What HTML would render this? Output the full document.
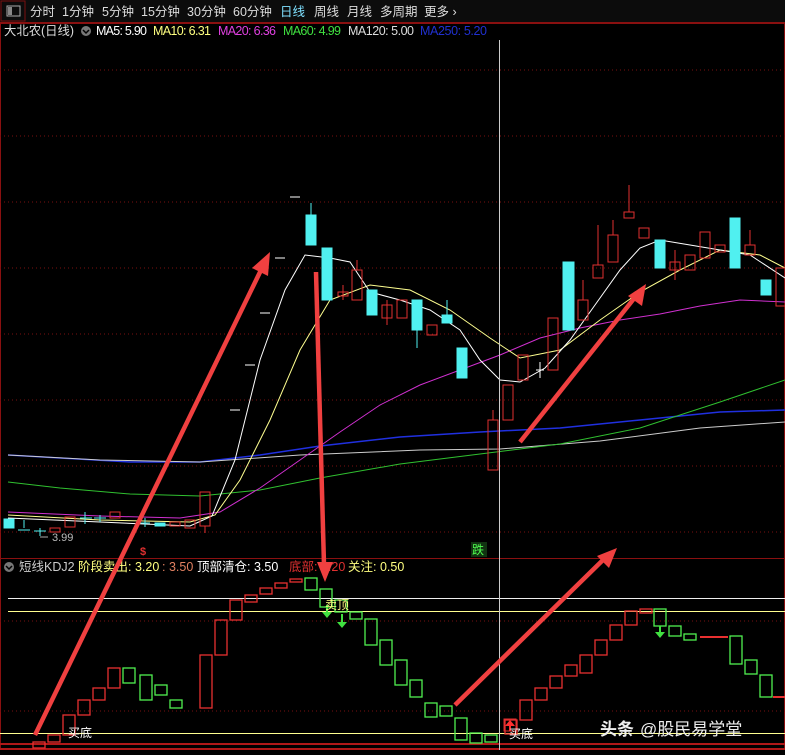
<!DOCTYPE html>
<html><head><meta charset="utf-8"><style>
html,body{margin:0;padding:0;background:#000;width:785px;height:755px;overflow:hidden;font-family:"Liberation Sans","Noto Sans CJK SC",sans-serif}
</style></head><body>
<svg width="785" height="755" style="position:absolute;left:0;top:0" font-family="Liberation Sans, Noto Sans CJK SC, sans-serif">
<rect x="0" y="0" width="785" height="755" fill="#000"/>
<rect x="0" y="0" width="785" height="22" fill="#0c0c0c"/>
<line x1="0" y1="22.5" x2="785" y2="22.5" stroke="#8a1010"/>
<rect x="1" y="1" width="24" height="20" fill="none" stroke="#7a1010"/>
<rect x="7" y="6" width="13" height="10" fill="none" stroke="#aaa"/>
<rect x="8" y="7" width="4" height="8" fill="#888"/>
<g font-size="12.5" fill="#ddd">
<text x="30" y="16">分时</text><text x="62" y="16">1分钟</text><text x="102" y="16">5分钟</text><text x="141" y="16">15分钟</text><text x="187" y="16">30分钟</text><text x="233" y="16">60分钟</text>
<text x="280" y="16" fill="#7fe0ff">日线</text><text x="314" y="16">周线</text><text x="347" y="16">月线</text><text x="380" y="16">多周期</text><text x="424" y="16">更多 ›</text>
</g>
<rect x="0.5" y="23.5" width="784" height="726" fill="none" stroke="#8a1010"/>
<line x1="0" y1="558.5" x2="785" y2="558.5" stroke="#8a1010"/>
<g font-size="12.5">
<text x="4" y="35" fill="#ddd" textLength="70" lengthAdjust="spacingAndGlyphs">大北农(日线)</text>
<circle cx="86" cy="31" r="5" fill="#777"/><path d="M83 30 l3 3 l3 -3" stroke="#000" fill="none" stroke-width="1.5"/>
<text x="96" y="35" fill="#fff" textLength="51">MA5: 5.90</text><text x="153" y="35" fill="#ffff80" textLength="58">MA10: 6.31</text>
<text x="218" y="35" fill="#e040e0" textLength="58">MA20: 6.36</text><text x="283" y="35" fill="#40e040" textLength="58">MA60: 4.99</text>
<text x="348" y="35" fill="#ddd" textLength="66">MA120: 5.00</text><text x="420" y="35" fill="#2030d0" textLength="67">MA250: 5.20</text>
</g>
<g stroke="#7a1010" stroke-dasharray="1,3">
<line x1="0" y1="70" x2="785" y2="70"/><line x1="0" y1="136" x2="785" y2="136"/><line x1="0" y1="202" x2="785" y2="202"/><line x1="0" y1="268" x2="785" y2="268"/><line x1="0" y1="334" x2="785" y2="334"/><line x1="0" y1="400" x2="785" y2="400"/><line x1="0" y1="466" x2="785" y2="466"/><line x1="0" y1="532" x2="785" y2="532"/>
<line x1="0" y1="621" x2="785" y2="621"/><line x1="0" y1="711" x2="785" y2="711"/>
</g>
<polyline fill="none" stroke="#2030e0" stroke-width="1.5" points="8,455 60,458 130,462 200,462 260,455 320,446 400,437 480,432 560,428 640,420 720,412 785,410"/>
<polyline fill="none" stroke="#ccc" points="8,455 100,460 200,462 300,455 420,450 500,449 600,441 700,428 785,422"/>
<polyline fill="none" stroke="#30c030" points="8,482 60,488 130,494 200,496 260,490 320,478 400,464 480,454 560,444 640,428 720,402 785,380"/>
<polyline fill="none" stroke="#d030d0" points="8,512 100,516 180,518 220,512 260,488 300,460 340,432 380,405 420,385 460,370 500,355 540,338 580,328 620,320 660,314 700,306 740,300 785,302"/>
<polyline fill="none" stroke="#ffff90" points="8,515 100,520 190,522 215,515 240,480 270,420 300,350 330,300 370,285 410,290 450,310 490,338 520,358 560,350 600,320 640,292 680,270 720,250 760,255 785,268"/>
<polyline fill="none" stroke="#fff" points="8,518 100,522 190,526 212,516 235,460 260,360 285,290 305,255 330,258 350,262 370,292 400,300 430,310 460,330 480,360 500,380 520,382 545,368 570,340 595,305 620,270 640,248 660,240 690,245 720,250 750,255 785,278"/>
<g fill="#50f0f0" stroke="#50f0f0">
<rect x="4" y="519" width="10" height="9"/><rect x="155" y="523" width="10" height="3"/>
<rect x="306" y="215" width="10" height="30"/><line x1="311" y1="203" x2="311" y2="215"/>
<rect x="322" y="248" width="10" height="52"/>
<rect x="367" y="290" width="10" height="25"/>
<rect x="412" y="300" width="10" height="30"/><line x1="417" y1="330" x2="417" y2="348"/>
<rect x="442" y="315" width="10" height="8"/><line x1="447" y1="300" x2="447" y2="315"/>
<rect x="457" y="348" width="10" height="30"/>
<rect x="563" y="262" width="11" height="68"/>
<rect x="655" y="240" width="10" height="28"/>
<rect x="730" y="218" width="10" height="50"/>
<rect x="761" y="280" width="10" height="15"/>
<line x1="24" y1="520" x2="24" y2="528"/><line x1="18" y1="530" x2="30" y2="530"/>
<line x1="40" y1="528" x2="40" y2="536"/><line x1="34" y1="531" x2="46" y2="531"/>
<line x1="85" y1="512" x2="85" y2="524"/><line x1="80" y1="518" x2="92" y2="518"/>
<line x1="100" y1="515" x2="100" y2="522"/><line x1="94" y1="518" x2="106" y2="518"/>
<line x1="145" y1="518" x2="145" y2="527"/><line x1="140" y1="523" x2="150" y2="523"/>
</g>
<g fill="none" stroke="#e03030">
<rect x="50" y="528" width="10" height="4"/><rect x="65" y="517" width="10" height="10"/>
<rect x="110" y="512" width="10" height="6"/><rect x="170" y="522" width="10" height="4"/><rect x="185" y="520" width="10" height="8"/>
<rect x="200" y="492" width="10" height="34"/><line x1="205" y1="526" x2="205" y2="533"/>
<rect x="338" y="292" width="10" height="4"/><line x1="343" y1="285" x2="343" y2="300"/>
<rect x="352" y="270" width="10" height="30"/><line x1="357" y1="260" x2="357" y2="270"/>
<rect x="382" y="305" width="10" height="13"/><line x1="387" y1="300" x2="387" y2="325"/>
<rect x="397" y="300" width="10" height="18"/>
<rect x="427" y="325" width="10" height="10"/>
<rect x="488" y="420" width="10" height="50"/><line x1="493" y1="410" x2="493" y2="420"/>
<rect x="503" y="385" width="10" height="35"/>
<rect x="518" y="355" width="10" height="25"/>
<rect x="548" y="318" width="10" height="52"/>
<rect x="578" y="300" width="10" height="20"/><line x1="583" y1="280" x2="583" y2="300"/>
<rect x="593" y="265" width="10" height="13"/><line x1="598" y1="225" x2="598" y2="265"/>
<rect x="608" y="235" width="10" height="27"/><line x1="613" y1="220" x2="613" y2="235"/>
<rect x="624" y="212" width="10" height="6"/><line x1="629" y1="185" x2="629" y2="212"/>
<rect x="639" y="228" width="10" height="10"/>
<rect x="670" y="262" width="10" height="8"/><line x1="675" y1="250" x2="675" y2="280"/>
<rect x="685" y="255" width="10" height="15"/>
<rect x="700" y="232" width="10" height="26"/>
<rect x="715" y="245" width="10" height="7"/>
<rect x="745" y="245" width="10" height="10"/><line x1="750" y1="230" x2="750" y2="245"/>
<rect x="776" y="268" width="10" height="38"/>
</g>
<g stroke="#fff"><line x1="536" y1="370" x2="544" y2="370"/><line x1="540" y1="362" x2="540" y2="378"/>
<line x1="230" y1="410" x2="240" y2="410"/><line x1="245" y1="365" x2="255" y2="365"/><line x1="260" y1="313" x2="270" y2="313"/><line x1="275" y1="258" x2="285" y2="258"/><line x1="290" y1="197" x2="300" y2="197"/></g>
<line x1="40" y1="537" x2="48" y2="537" stroke="#aaa"/>
<text x="52" y="541" fill="#bbb" font-size="11">3.99</text>
<text x="140" y="555" fill="#e03030" font-size="11" font-weight="bold">$</text>
<rect x="471" y="542" width="16" height="15" fill="#113311"/>
<text x="472" y="554" fill="#50ff50" font-size="12">跌</text>
<circle cx="9" cy="567" r="5" fill="#777"/><path d="M6 566 l3 3 l3 -3" stroke="#000" fill="none" stroke-width="1.5"/>
<g font-size="12.5">
<text x="19" y="571" fill="#ccc">短线KDJ2</text><text x="78" y="571" fill="#ffff80">阶段卖出: 3.20</text><text x="162" y="571" fill="#e08060">: 3.50</text>
<text x="197" y="571" fill="#fff">顶部清仓: 3.50</text><text x="289" y="571" fill="#e03030">底部: 0.20</text><text x="348" y="571" fill="#ffff80">关注: 0.50</text>
</g>
<line x1="8" y1="598.5" x2="785" y2="598.5" stroke="#eee"/>
<line x1="8" y1="611.5" x2="785" y2="611.5" stroke="#ffff90"/>
<line x1="0" y1="733.5" x2="785" y2="733.5" stroke="#ffff90"/>
<line x1="0" y1="744" x2="785" y2="744" stroke="#b01818" stroke-width="2"/>
<line x1="0" y1="749" x2="785" y2="749" stroke="#b01818" stroke-width="2"/>
<g fill="none" stroke="#e83030" stroke-width="1.3">
<rect x="33" y="742" width="12" height="6"/><rect x="48" y="735" width="12" height="7"/><rect x="63" y="715" width="12" height="20"/><rect x="78" y="700" width="12" height="15"/><rect x="93" y="688" width="12" height="12"/><rect x="108" y="668" width="12" height="20"/>
<rect x="200" y="655" width="12" height="53"/><rect x="215" y="620" width="12" height="35"/><rect x="230" y="600" width="12" height="20"/><rect x="245" y="595" width="12" height="7"/><rect x="260" y="588" width="12" height="6"/><rect x="275" y="583" width="12" height="5"/><rect x="290" y="579" width="12" height="3"/>
<rect x="505" y="720" width="12" height="14"/><rect x="520" y="700" width="12" height="20"/><rect x="535" y="688" width="12" height="12"/><rect x="550" y="676" width="12" height="12"/><rect x="565" y="665" width="12" height="11"/><rect x="580" y="655" width="12" height="18"/><rect x="595" y="640" width="12" height="15"/><rect x="610" y="625" width="12" height="15"/><rect x="625" y="611" width="12" height="14"/><rect x="640" y="609" width="12" height="4"/>
<line x1="700" y1="637" x2="728" y2="637" stroke-width="2"/><line x1="773" y1="697" x2="785" y2="697" stroke-width="2"/>
</g>
<g fill="none" stroke="#50f050" stroke-width="1.3">
<rect x="123" y="668" width="12" height="15"/><rect x="140" y="675" width="12" height="25"/><rect x="155" y="685" width="12" height="10"/><rect x="170" y="700" width="12" height="8"/>
<rect x="305" y="578" width="12" height="12"/><rect x="320" y="589" width="12" height="18"/><rect x="335" y="600" width="12" height="12"/><rect x="350" y="612" width="12" height="7"/><rect x="365" y="619" width="12" height="26"/><rect x="380" y="640" width="12" height="25"/><rect x="395" y="660" width="12" height="25"/><rect x="410" y="680" width="12" height="17"/><rect x="425" y="703" width="12" height="14"/><rect x="440" y="706" width="12" height="10"/><rect x="455" y="718" width="12" height="22"/><rect x="470" y="733" width="12" height="10"/><rect x="485" y="735" width="12" height="7"/>
<rect x="654" y="609" width="12" height="17"/><rect x="669" y="626" width="12" height="10"/><rect x="684" y="634" width="12" height="6"/><rect x="730" y="636" width="12" height="28"/><rect x="745" y="660" width="12" height="14"/><rect x="760" y="675" width="12" height="22"/>
</g>
<g fill="#40e040"><path d="M322 612 l10 0 l-5 6z"/><path d="M337 622 l10 0 l-5 6z"/><path d="M655 632 l10 0 l-5 6z"/>
<rect x="326" y="605" width="2" height="8"/><rect x="341" y="614" width="2" height="8"/><rect x="659" y="626" width="2" height="6"/></g>
<text x="325" y="609" fill="#ffff80" font-size="12">卖顶</text>
<rect x="504" y="719" width="12" height="12" fill="none" stroke="#e03030"/>
<path d="M505 726 l5 -6 l5 6z" fill="#ff3030"/><rect x="509" y="725" width="2" height="6" fill="#ff3030"/>
<text x="68" y="737" fill="#fff" font-size="12">买底</text>
<text x="509" y="738" fill="#fff" font-size="12">买底</text>
<line x1="499.5" y1="40" x2="499.5" y2="750" stroke="#ccc"/>
<g stroke="#f04040" stroke-width="4.5" fill="#f04040">
<line x1="35" y1="735" x2="262" y2="268"/><path d="M270 252 l-2 24 l-16 -8z" stroke="none"/>
<line x1="316" y1="272" x2="324" y2="565"/><path d="M325 582 l-8 -20 l16 0z" stroke="none"/>
<line x1="455" y1="705" x2="605" y2="558"/><path d="M617 548 l-8 20 l-12 -12z" stroke="none"/>
<line x1="520" y1="442" x2="636" y2="296"/><path d="M646 284 l-4 22 l-14 -10z" stroke="none"/>
</g>
<text x="600" y="735" fill="#eee" font-size="17" font-weight="bold">头条</text>
<text x="640" y="735" fill="#eee" font-size="17">@股民易学堂</text>
</svg>
</body></html>
